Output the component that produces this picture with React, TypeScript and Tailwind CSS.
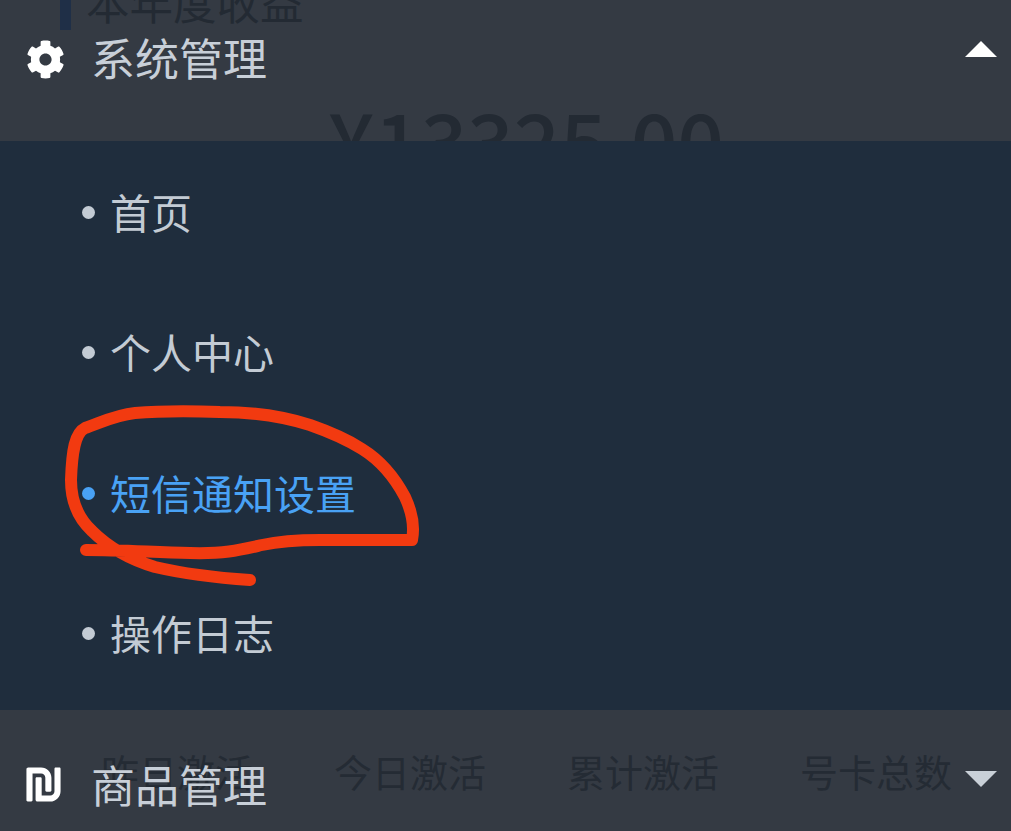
import { FaCog, FaShekelSign } from "react-icons/fa";

const cjk = "font-['Noto_Sans_CJK_SC','Noto_Sans',sans-serif]";

const items = [
  { label: "首页", active: false },
  { label: "个人中心", active: false },
  { label: "短信通知设置", active: true },
  { label: "操作日志", active: false },
];

const stats = ["昨日激活", "今日激活", "累计激活", "号卡总数"];

const Arrow = ({ up }: { up: boolean }) => (
  <svg
    width="32"
    height="18"
    viewBox="0 0 32 18"
    className={`shrink-0 ${up ? "mb-[21px]" : "mb-[12px]"}`}
  >
    <path d={up ? "M16 1 L32 17 L0 17 Z" : "M16 17 L32 1 L0 1 Z"} fill={up ? "#ffffff" : "#c9d0d8"} />
  </svg>
);

const Scribble = () => (
  <svg
    width="1011"
    height="831"
    viewBox="0 0 1011 831"
    fill="none"
    className="pointer-events-none absolute left-0 top-0"
  >
    <path
      d="M86 550 C120 550 150 552 190 553 C225 554 240 550 262 545 C280 541 300 540 320 540 L412 540 C415 525 412 512 405 497 C396 480 383 462 362 449 C345 438 330 432 310 425 C285 417 255 412 220 412 C190 411 160 411 135 413 C115 415 100 423 85 428 C75 433 72 450 71 480 C71 500 78 518 92 531 C104 543 125 558 155 567 C185 574 220 578 250 580"
      stroke="#f23a10"
      strokeWidth="12"
      strokeLinecap="round"
      strokeLinejoin="round"
    />
  </svg>
);

export default function App() {
  return (
    <div className={`relative flex h-[831px] w-[1011px] flex-col overflow-hidden bg-[#343a43] ${cjk}`}>
      {/* top bar, the dimmed page shows through behind it */}
      <div className="grid h-[141px] shrink-0 grid-cols-1 overflow-hidden">
        <div className="[grid-area:1/1] flex flex-col">
          <div className="-mt-[16px] flex h-[46px] items-center pl-[60px] text-[#232a33]">
            <div className="h-[46px] w-[11px] bg-[#1f2f47]" />
            <span className="mb-[10px] ml-[15px] text-[43.5px] leading-none">本年度收益</span>
          </div>
          <div className="mt-[67px] pl-[328px] text-[81.5px] leading-none font-medium whitespace-nowrap text-[#232a33]">
            ¥13325.00
          </div>
        </div>
        <div className="[grid-area:1/1] flex h-[119px] items-center justify-between pl-[26px] pr-[14px]">
          <div className="flex items-center">
            <FaCog size={39} color="#ffffff" />
            <span className="mb-[6px] ml-[26px] text-[44px] leading-none text-[#c8cfd8]">系统管理</span>
          </div>
          <Arrow up />
        </div>
      </div>

      {/* opened submenu */}
      <ul className="flex h-[569px] shrink-0 flex-col bg-[#1f2d3d] pt-[1px]">
        {items.map((item) => (
          <li
            key={item.label}
            className={`flex h-[140.5px] items-center pl-[82px] text-[41px] leading-none ${
              item.active ? "text-[#49a2f5]" : "text-[#c3cbd4]"
            }`}
          >
            <span
              className={`mr-[15px] h-[13px] w-[13px] rounded-full ${item.active ? "bg-[#49a2f5]" : "bg-[#c3cbd4]"}`}
            />
            <span className="mb-[2px]">{item.label}</span>
          </li>
        ))}
      </ul>

      {/* bottom bar */}
      <div className="grid flex-1 grid-cols-1 overflow-hidden">
        <div className="[grid-area:1/1] flex pl-[101px] pt-[38px]">
          {stats.map((stat) => (
            <span key={stat} className="mr-[81px] text-[38px] leading-[46px] whitespace-nowrap text-[#242b34]">
              {stat}
            </span>
          ))}
        </div>
        <div className="[grid-area:1/1] flex items-center justify-between pl-[24px] pr-[14px] pt-[28px]">
          <div className="flex items-center">
            <FaShekelSign size={39} color="#ffffff" />
            <span className="mb-[2px] ml-[28px] text-[44px] leading-none text-[#c8cfd8]">商品管理</span>
          </div>
          <Arrow up={false} />
        </div>
      </div>

      <Scribble />
    </div>
  );
}
